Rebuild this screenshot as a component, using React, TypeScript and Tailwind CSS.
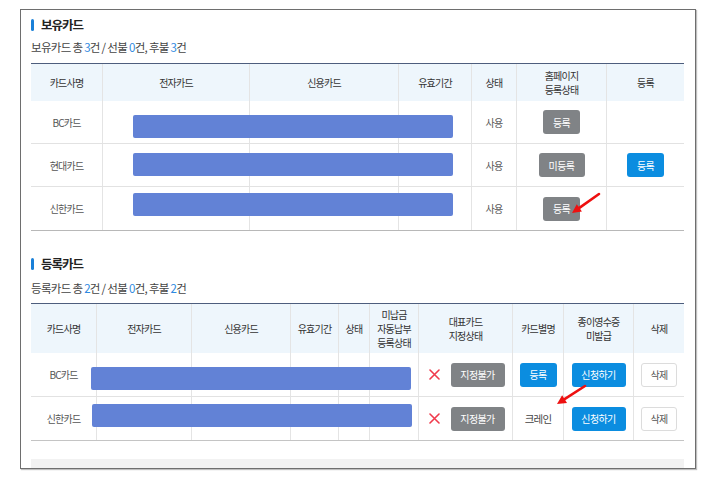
import React from "react";

const FONT = "font-['Noto_Sans_CJK_KR','Noto_Sans',sans-serif]";

type BtnColor = "gray" | "blue" | "white";

function Btn({ label, color, w }: { label: string; color: BtnColor; w: string }) {
  const tone =
    color === "gray"
      ? "bg-[#808386] text-white"
      : color === "blue"
        ? "bg-[#0b8de0] text-white"
        : "bg-white text-[#555] border border-[#dcdcdc]";
  return (
    <div
      className={`${w} h-[24px] rounded-[3px] flex items-center justify-center text-[10px] tracking-[-0.6px] ${tone}`}
    >
      {label}
    </div>
  );
}

function Heading({ title }: { title: string }) {
  return (
    <div className="h-[20px] flex items-center gap-[7px]">
      <span className="w-[3px] h-[12px] rounded-[2px] bg-[#1a80d8]" />
      <span className="text-[12.5px] font-bold text-[#222] tracking-[-1px]">{title}</span>
    </div>
  );
}

function Summary({ label, total, pre, post }: { label: string; total: number; pre: number; post: number }) {
  return (
    <div className="h-[16px] flex items-center text-[11.5px] text-[#444] tracking-[-0.7px] whitespace-pre">
      {label} 총 <span className="text-[#2f8ae0]">{total}</span>건 / 선불 <span className="text-[#2f8ae0]">{pre}</span>
      건, 후불 <span className="text-[#2f8ae0]">{post}</span>건
    </div>
  );
}

function Cell({ children, first }: { children?: React.ReactNode; first?: boolean }) {
  return (
    <div
      className={`flex items-center justify-center text-center ${first ? "" : "border-l border-[#e4e4e4]"}`}
    >
      {children}
    </div>
  );
}

function Mask({ left, top }: { left: number; top: number }) {
  return (
    <div
      className="absolute w-[320px] h-[23px] rounded-[2px] bg-[#6282d6]"
      style={{ left, top }}
    />
  );
}

const cols1 = "grid-cols-[71px_147px_149px_73px_45px_90px_78px]";
const cols2 = "grid-cols-[65px_95px_99px_48px_31px_49px_94px_51px_70px_51px]";

const owned = [
  { name: "BC카드", top: 14, home: "등록", reg: false, h: "h-[43px] border-[#e2e2e2]" },
  { name: "현대카드", top: 9, home: "미등록", reg: true, h: "h-[43px] border-[#e2e2e2]" },
  { name: "신한카드", top: 6, home: "등록", reg: false, h: "h-[44px] border-[#b8b8b8]" },
];

const registered = [
  { name: "BC카드", left: 60, top: 14, alias: null as string | null, h: "h-[44px] border-[#e2e2e2]" },
  { name: "신한카드", left: 61, top: 7, alias: "크레인", h: "h-[44px] border-[#c4c4c4]" },
];

function RedX() {
  return (
    <svg width="11" height="11" viewBox="0 0 11 11">
      <path d="M1 1L10 10M10 1L1 10" stroke="#f03a4c" strokeWidth="1.6" strokeLinecap="round" />
    </svg>
  );
}

function Arrow({ left, top, x1, y1, x2, y2 }: { left: number; top: number; x1: number; y1: number; x2: number; y2: number }) {
  const dx = x2 - x1;
  const dy = y2 - y1;
  const len = Math.hypot(dx, dy);
  const ux = dx / len;
  const uy = dy / len;
  const bx = x2 - ux * 9;
  const by = y2 - uy * 9;
  const px = -uy;
  const py = ux;
  const pts = `${x2},${y2} ${bx + px * 4.5},${by + py * 4.5} ${bx - px * 4.5},${by - py * 4.5}`;
  return (
    <svg className="absolute" width="44" height="30" style={{ left, top }}>
      <line x1={x1} y1={y1} x2={bx} y2={by} stroke="#ee1010" strokeWidth="2.6" strokeLinecap="round" />
      <polygon points={pts} fill="#ee1010" />
    </svg>
  );
}

export default function App() {
  return (
    <div className={`w-[709px] h-[481px] bg-white pt-[9px] ${FONT}`}>
      <div className="relative ml-[20px] w-[676px] h-[460px] border border-[#6e6e6e] shadow-[1px_1px_1px_rgba(0,0,0,0.25)] overflow-hidden pl-[10px] pr-[11px]">
        <div className="mt-[5px]">
          <Heading title="보유카드" />
        </div>
        <div className="mt-[5px]">
          <Summary label="보유카드" total={3} pre={0} post={3} />
        </div>

        <div className="mt-[7px] w-[653px]">
          <div className={`grid ${cols1} h-[38px] border-t border-[#4d5d7d] bg-[#eef6fc] text-[10px] text-[#333] tracking-[-0.8px] leading-[14px]`}>
            <Cell first>카드사명</Cell>
            <Cell>전자카드</Cell>
            <Cell>신용카드</Cell>
            <Cell>유효기간</Cell>
            <Cell>상태</Cell>
            <Cell>
              홈페이지
              <br />
              등록상태
            </Cell>
            <Cell>등록</Cell>
          </div>
          {owned.map((r) => (
            <div key={r.name} className={`relative grid ${cols1} ${r.h} border-b text-[10px] text-[#555] tracking-[-0.8px]`}>
              <Cell first>{r.name}</Cell>
              <Cell />
              <Cell />
              <Cell />
              <Cell>사용</Cell>
              <Cell>
                <Btn label={r.home} color="gray" w={r.home === "미등록" ? "w-[46px]" : "w-[37px]"} />
              </Cell>
              <Cell>{r.reg && <Btn label="등록" color="blue" w="w-[37px]" />}</Cell>
              <Mask left={102} top={r.top} />
            </div>
          ))}
        </div>

        <div className="mt-[23px]">
          <Heading title="등록카드" />
        </div>
        <div className="mt-[7px]">
          <Summary label="등록카드" total={2} pre={0} post={2} />
        </div>

        <div className="mt-[6px] w-[653px]">
          <div className={`grid ${cols2} h-[50px] border-t border-[#4d5d7d] bg-[#eef6fc] text-[10px] text-[#333] tracking-[-0.8px] leading-[14px]`}>
            <Cell first>카드사명</Cell>
            <Cell>전자카드</Cell>
            <Cell>신용카드</Cell>
            <Cell>유효기간</Cell>
            <Cell>상태</Cell>
            <Cell>
              미납금
              <br />
              자동납부
              <br />
              등록상태
            </Cell>
            <Cell>
              대표카드
              <br />
              지정상태
            </Cell>
            <Cell>카드별명</Cell>
            <Cell>
              종이영수증
              <br />
              미발급
            </Cell>
            <Cell>삭제</Cell>
          </div>
          {registered.map((r) => (
            <div key={r.name} className={`relative grid ${cols2} ${r.h} border-b text-[10px] text-[#555] tracking-[-0.8px]`}>
              <Cell first>{r.name}</Cell>
              <Cell />
              <Cell />
              <Cell />
              <Cell />
              <Cell />
              <Cell>
                <div className="flex items-center gap-[11px] pl-[2px]">
                  <RedX />
                  <Btn label="지정불가" color="gray" w="w-[54px]" />
                </div>
              </Cell>
              <Cell>{r.alias ? <span className="text-[10.5px] text-[#444]">{r.alias}</span> : <Btn label="등록" color="blue" w="w-[37px]" />}</Cell>
              <Cell>
                <Btn label="신청하기" color="blue" w="w-[54px]" />
              </Cell>
              <Cell>
                <Btn label="삭제" color="white" w="w-[36px]" />
              </Cell>
              <Mask left={r.left} top={r.top} />
            </div>
          ))}
        </div>

        <div className="mt-[18px] w-[653px] h-[20px] bg-[#f2f2f2]" />

        <Arrow left={544} top={180} x1={34} y1={4} x2={7} y2={23} />
        <Arrow left={529} top={372} x1={35} y1={4} x2={7} y2={22} />
      </div>
    </div>
  );
}
